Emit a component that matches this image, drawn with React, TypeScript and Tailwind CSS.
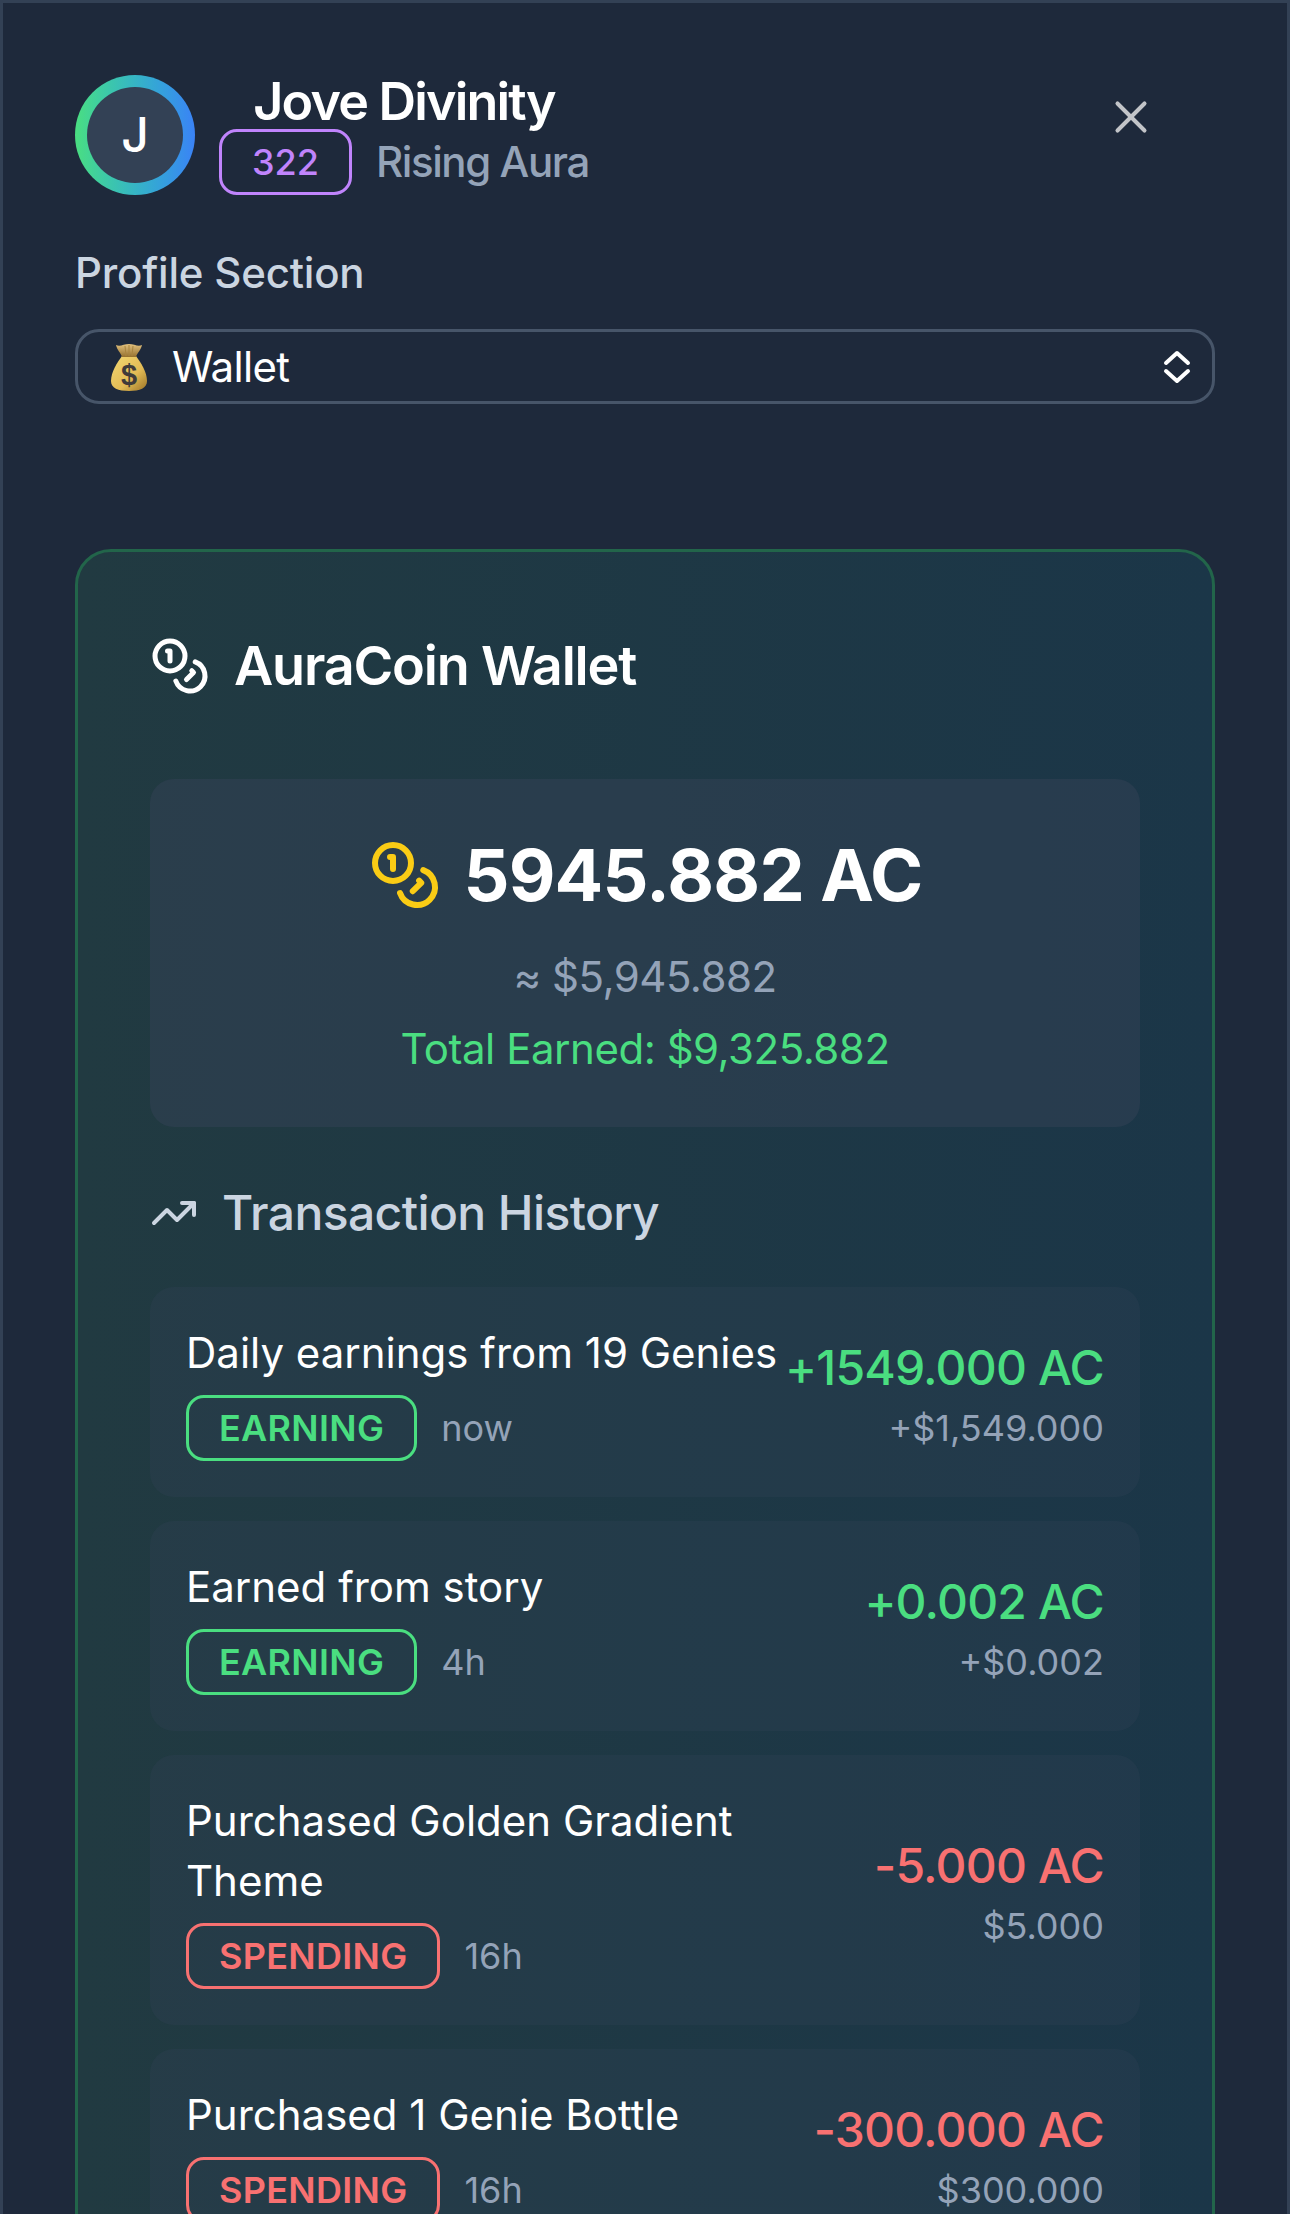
import { Coins, TrendingUp, X } from 'lucide-react';

interface Transaction {
    title: string;
    kind: 'earning' | 'spending';
    time: string;
    amount: string;
    usd: string;
}

const transactions: Transaction[] = [
    { title: 'Daily earnings from 19 Genies', kind: 'earning', time: 'now', amount: '+1549.000 AC', usd: '+$1,549.000' },
    { title: 'Earned from story', kind: 'earning', time: '4h', amount: '+0.002 AC', usd: '+$0.002' },
    { title: 'Purchased Golden Gradient Theme', kind: 'spending', time: '16h', amount: '-5.000 AC', usd: '$5.000' },
    { title: 'Purchased 1 Genie Bottle', kind: 'spending', time: '16h', amount: '-300.000 AC', usd: '$300.000' },
];

function MoneyBag() {
    return (
        <svg width="36" height="48" viewBox="0 0 36 48" className="shrink-0">
            <defs>
                <linearGradient id="bag" x1="0" y1="0" x2="1" y2="1">
                    <stop offset="0" stopColor="#f3d873" />
                    <stop offset="0.6" stopColor="#e2bb55" />
                    <stop offset="1" stopColor="#9c7427" />
                </linearGradient>
                <linearGradient id="neck" x1="0" y1="0" x2="0" y2="1">
                    <stop offset="0" stopColor="#e3c27e" />
                    <stop offset="1" stopColor="#94702f" />
                </linearGradient>
            </defs>
            <path d="M11 13C6 20 0 29 0 38c0 7 7 10 18 10s18-3 18-10c0-9-6-18-11-25z" fill="url(#bag)" />
            <path d="M5 2c4 2 8-1 13-1s9 3 13 1c-1 5-5 8-6 12H11C10 10 6 7 5 2z" fill="url(#neck)" />
            <path d="M14 3l1 10M18 2v11M22 3l-1 10" stroke="#a9853f" strokeWidth="1" fill="none" />
            <text x="18" y="41.500" textAnchor="middle" fontFamily="'Liberation Sans', sans-serif" fontSize="29" fontWeight="700" fill="#3f3b3a">
                $
            </text>
        </svg>
    );
}

function SelectArrows() {
    return (
        <svg width="28" height="34" viewBox="0 0 28 34" fill="none" stroke="#fff" strokeWidth="4" strokeLinecap="round" strokeLinejoin="round">
            <path d="M3 13 14 3l11 10" />
            <path d="M3 21l11 10 11-10" />
        </svg>
    );
}

function TransactionRow({ tx }: { tx: Transaction }) {
    const earning = tx.kind === 'earning';
    return (
        <div className="flex items-center justify-between gap-[6px] rounded-[24px] bg-[#334155]/30 p-9">
            <div className="min-w-0 flex-1">
                <p className="text-[42px] leading-[60px] text-white">{tx.title}</p>
                <div className="mt-3 flex items-center gap-[24px]">
                    <span
                        className={`rounded-[18px] border-[3px] px-[30px] py-1.5 text-[36px] leading-[48px] font-semibold tracking-[0.3px] ${
                            earning ? 'border-[#4ade80] text-[#4ade80]' : 'border-[#f87171] text-[#f87171]'
                        }`}
                    >
                        {earning ? 'EARNING' : 'SPENDING'}
                    </span>
                    <span className="text-[36px] leading-[48px] text-[#94a3b8]">{tx.time}</span>
                </div>
            </div>
            <div className="shrink-0 text-right">
                <p className={`text-[48px] leading-[72px] font-[450] tracking-[-0.8px] ${earning ? 'text-[#4ade80]' : 'text-[#f87171]'}`}>{tx.amount}</p>
                <p className="text-[36px] leading-[48px] text-[#94a3b8]">{tx.usd}</p>
            </div>
        </div>
    );
}

export default function App() {
    return (
        <div className="h-[2214px] overflow-hidden border-x-[3px] border-t-[3px] border-[#334155] bg-[#1e293b] px-[72px] pt-[72px] font-['Inter',sans-serif] text-white">
            {/* Header */}
            <div className="flex items-start justify-between">
                <div className="flex items-center gap-6">
                    <div className="h-[120px] w-[120px] rounded-full bg-gradient-to-r from-[#4ade80] to-[#3b82f6] p-3">
                        <div className="flex h-full w-full items-center justify-center rounded-full bg-[#334155] text-[48px] font-medium">J</div>
                    </div>
                    <div className="flex flex-col items-center">
                        <p className="text-[52px] leading-[54px] font-semibold tracking-[-1.8px]">Jove Divinity</p>
                        <div className="flex items-center gap-6">
                            <span className="rounded-[18px] border-[3px] border-[#c084fc] px-[30px] py-1.5 text-[36px] leading-[48px] font-medium text-[#c084fc]">322</span>
                            <span className="text-[42px] leading-[60px] font-medium tracking-[-1.4px] text-[#94a3b8]">Rising Aura</span>
                        </div>
                    </div>
                </div>
                <button className="mt-[15px] mr-[57px] text-[#c2c4c8]">
                    <X size={54} strokeWidth={1.8} />
                </button>
            </div>

            {/* Section select */}
            <p className="mt-12 mb-[26px] text-[42px] leading-[60px] font-medium tracking-[-0.2px] text-[#cbd5e1]">Profile Section</p>
            <div className="flex h-[75px] items-center justify-between rounded-[24px] border-[3px] border-[#475569] pr-[21px] pl-[33px]">
                <div className="flex items-center gap-[25px]">
                    <MoneyBag />
                    <span className="text-[42px] tracking-[-0.7px]">Wallet</span>
                </div>
                <SelectArrows />
            </div>

            {/* Wallet card */}
            <div className="mt-[145px] rounded-[36px] border-[3px] border-[#22654a] bg-gradient-to-r from-[#213a41] to-[#1b3648] p-[72px]">
                <div className="flex items-center gap-[24px]">
                    <Coins size={60} />
                    <h2 className="text-[54px] leading-[84px] font-semibold tracking-[-1.2px]">AuraCoin Wallet</h2>
                </div>

                <div className="mt-[71px] rounded-[24px] bg-[#334155]/50 py-12 text-center">
                    <div className="flex items-center justify-center gap-[22px] pl-[2px]">
                        <Coins size={72} className="text-[#facc15]" />
                        <span className="text-[72px] leading-[96px] font-bold tracking-[-0.8px]">5945.882 AC</span>
                    </div>
                    <p className="mt-6 text-[42px] leading-[60px] tracking-[-0.5px] text-[#94a3b8]">≈ $5,945.882</p>
                    <p className="mt-3 text-[42px] leading-[60px] tracking-[-0.47px] text-[#4ade80]">Total Earned: $9,325.882</p>
                </div>

                <div className="mt-[50px] mb-[38px] flex items-center gap-[24px] text-[#cbd5e1]">
                    <TrendingUp size={48} />
                    <h3 className="text-[48px] leading-[72px] font-medium tracking-[-0.6px]">Transaction History</h3>
                </div>

                <div className="flex flex-col gap-6">
                    {transactions.map((tx) => (
                        <TransactionRow key={tx.title} tx={tx} />
                    ))}
                </div>
            </div>
        </div>
    );
}
